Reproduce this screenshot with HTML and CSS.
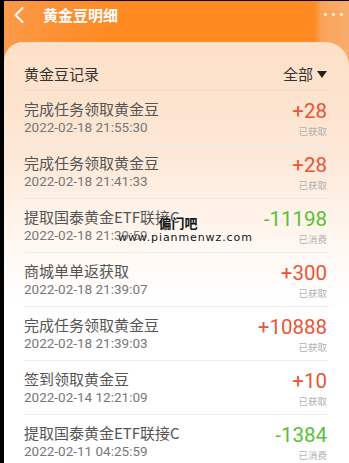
FILE: index.html
```html
<!DOCTYPE html>
<html lang="zh">
<head>
<meta charset="utf-8">
<title>黄金豆明细</title>
<link rel="stylesheet" href="styles.css">
</head>
<body>
<div class="page">
  <header class="topbar">
    <svg class="back" width="14" height="18" viewBox="0 0 14 18"><path d="M10.5 2 L3.5 9 L10.5 16" fill="none" stroke="#fff" stroke-width="2" stroke-linecap="round" stroke-linejoin="round"/></svg>
    <h1 class="title">黄金豆明细</h1>
    <div class="more"><span></span><span></span><span></span></div>
  </header>
  <main class="card">
    <div class="sect">
      <span class="sect-title">黄金豆记录</span>
      <span class="filter">全部<svg class="tri" width="10" height="7" viewBox="0 0 10 7"><path d="M0 0 H10 L5 7 Z" fill="#222"/></svg></span>
    </div>
    <ul class="list">
      <li class="row"><div class="l"><div class="name">完成任务领取黄金豆</div><div class="date">2022-02-18 21:55:30</div></div><div class="r"><div class="amt plus">+28</div><div class="st">已获取</div></div></li>
      <li class="row"><div class="l"><div class="name">完成任务领取黄金豆</div><div class="date">2022-02-18 21:41:33</div></div><div class="r"><div class="amt plus">+28</div><div class="st">已获取</div></div></li>
      <li class="row"><div class="l"><div class="name">提取国泰黄金ETF联接C</div><div class="date">2022-02-18 21:39:59</div></div><div class="r"><div class="amt minus">-11198</div><div class="st">已消费</div></div></li>
      <li class="row"><div class="l"><div class="name">商城单单返获取</div><div class="date">2022-02-18 21:39:07</div></div><div class="r"><div class="amt plus">+300</div><div class="st">已获取</div></div></li>
      <li class="row"><div class="l"><div class="name">完成任务领取黄金豆</div><div class="date">2022-02-18 21:39:03</div></div><div class="r"><div class="amt plus">+10888</div><div class="st">已获取</div></div></li>
      <li class="row"><div class="l"><div class="name">签到领取黄金豆</div><div class="date">2022-02-14 12:21:09</div></div><div class="r"><div class="amt plus">+10</div><div class="st">已获取</div></div></li>
      <li class="row"><div class="l"><div class="name">提取国泰黄金ETF联接C</div><div class="date">2022-02-11 04:25:59</div></div><div class="r"><div class="amt minus">-1384</div><div class="st">已消费</div></div></li>
    </ul>
  </main>
  <div class="watermark"><div class="wm1">偏门吧</div><div class="wm2">www.pianmenwz.com</div></div>
</div>
</body>
</html>
```
FILE: styles.css
```css
html, body {
  margin: 0;
  padding: 0;
  background: #000;
  height: 100%;
  overflow: hidden;
}
body {
  font-family: Roboto, "Noto Sans CJK SC", sans-serif;
}
.page {
  position: relative;
  margin: 1px 0 0 4px;
  height: 462px;
  background: linear-gradient(90deg, #fb9a48 0%, #fe8f30 18%, #ff8a22 30%, #ff8a22 90%, #f9a35a 92%, #f8ad6c 100%);
  overflow: hidden;
}
.topbar {
  height: 41px;
  display: flex;
  align-items: flex-start;
  padding-top: 5px;
  box-sizing: border-box;
}
.back {
  margin-left: 8px;
}
.title {
  margin: 0 0 0 17px;
  font-family: "Noto Sans CJK SC", sans-serif;
  font-size: 15px;
  font-weight: 700;
  color: #fff;
  line-height: 17px;
}
.more {
  margin-left: auto;
  margin-right: 6px;
  margin-top: 7px;
  display: flex;
  gap: 5px;
}
.more span {
  width: 3px;
  height: 3px;
  border-radius: 50%;
  background: #fff;
  opacity: 0.9;
}
.card {
  height: 430px;
  border-radius: 19px 24px 0 0;
  background: linear-gradient(180deg, #fde0c7 0%, #fde7d6 25%, #fff6ef 45%, #ffffff 60%, #ffffff 100%);
  padding: 0 21px 0 20px;
}
.sect {
  height: 49px;
  box-sizing: border-box;
  border-bottom: 1px solid #eedccd;
  display: flex;
  align-items: flex-end;
  justify-content: space-between;
  padding-bottom: 6px;
}
.sect-title {
  font-family: "Noto Sans CJK SC", sans-serif;
  font-size: 15px;
  line-height: 20px;
  color: #333;
}
.filter {
  font-family: "Noto Sans CJK SC", sans-serif;
  font-size: 15px;
  line-height: 20px;
  color: #333;
  display: flex;
  align-items: center;
  gap: 4px;
  margin-right: 1px;
}
.list {
  list-style: none;
  margin: 0;
  padding: 0;
}
.row {
  height: 54px;
  box-sizing: border-box;
  border-bottom: 1px solid #ececec;
  display: flex;
  justify-content: space-between;
  padding-top: 9px;
}
.name {
  font-family: "Noto Sans CJK SC", sans-serif;
  font-size: 15px;
  line-height: 18px;
  color: #555;
}
.date {
  font-size: 13.5px;
  line-height: 18px;
  color: #777;
}
.r {
  text-align: right;
  margin-right: 1px;
}
.amt {
  font-size: 20.5px;
  line-height: 22px;
}
.plus { color: #ea5537; }
.minus { color: #56c236; }
.st {
  font-family: "Noto Sans CJK SC", sans-serif;
  font-size: 9.5px;
  line-height: 12px;
  margin-top: 3px;
  color: #b2b2b2;
}
.watermark {
  position: absolute;
  left: 114px;
  top: 214px;
  width: 116px;
  text-align: center;
  color: #111;
  text-shadow: 0 0 1px #fff;
}
.wm1 {
  font-family: "Noto Sans CJK SC", sans-serif;
  font-size: 13px;
  font-weight: 700;
  line-height: 16px;
  padding-left: 4px;
}
.wm2 {
  font-family: "DejaVu Sans", sans-serif;
  font-size: 11px;
  letter-spacing: 0.9px;
  line-height: 14px;
}
```
